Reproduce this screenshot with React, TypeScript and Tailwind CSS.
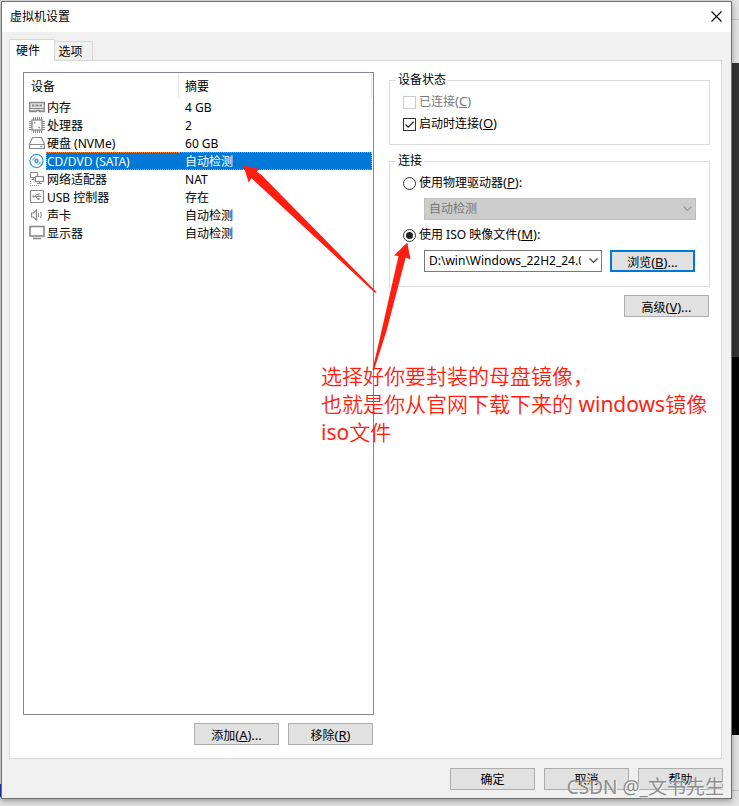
import { useState } from "react";
import type { ButtonHTMLAttributes, InputHTMLAttributes, ReactNode, SelectHTMLAttributes } from "react";
import clsx from "clsx";

type Device = {
  id: string;
  name: string;
  summary: string;
  icon: ReactNode;
};

const Icon = ({ children }: { children: ReactNode }) => (
  <svg viewBox="0 0 16 16" className="ml-[5px] block h-4 w-4" fill="none" stroke="#8a8a8a" aria-hidden="true">
    {children}
  </svg>
);

const devices: Device[] = [
  {
    id: "memory",
    name: "内存",
    summary: "4 GB",
    icon: (
      <Icon>
        <path d="M.7 3.500h14.600v9h-5v-1h-3v1H.7z" fill="#e6e6e6" strokeWidth="1.300" />
        <path d="M.5 9.500h15" />
        <path d="M3 6.500h2.500M6.500 6.500h3M10.500 6.500H13" strokeWidth="2" />
        <path d="M2.500 11.500h4M10.500 11.500h4" strokeDasharray="1 1" />
      </Icon>
    ),
  },
  {
    id: "cpu",
    name: "处理器",
    summary: "2",
    icon: (
      <Icon>
        <path d="M4 1.500h9M4 14.500h9" strokeWidth="3" strokeDasharray="1 1" />
        <path d="M1.500 4v9M14.500 4v9" strokeWidth="3" strokeDasharray="1 1" />
        <rect x="3" y="3" width="10" height="10" fill="#fff" strokeWidth="1.300" />
        <path d="M5 5.500h1.500M9.500 10.500H11" strokeWidth="1.300" />
      </Icon>
    ),
  },
  {
    id: "disk",
    name: "硬盘 (NVMe)",
    summary: "60 GB",
    icon: (
      <Icon>
        <path d="M3.500 2.500h9l3 6.500v4.500h-15v-4.500zM.5 9.500h15" strokeWidth="1.200" />
        <path d="M11 11.500h2.500" />
      </Icon>
    ),
  },
  {
    id: "cd",
    name: "CD/DVD (SATA)",
    summary: "自动检测",
    icon: (
      <Icon>
        <g stroke="#4a90c8">
          <circle cx="7.500" cy="8" r="6.600" strokeWidth="1.200" />
          <circle cx="7.500" cy="8" r="1.500" strokeWidth="1.500" />
          <path d="M3.700 7.500A4 4 0 0 1 6.500 4.200M11.300 8.500A4 4 0 0 1 8.500 11.800" stroke="#8cbbe0" strokeWidth="1.600" />
        </g>
      </Icon>
    ),
  },
  {
    id: "network",
    name: "网络适配器",
    summary: "NAT",
    icon: (
      <Icon>
        <path d="M6.500 6.500h-5v-5h7v4M4.500 6.500v2M2.500 8.500h3" strokeWidth="1.200" />
        <rect x="6.500" y="5.500" width="8" height="5" strokeWidth="1.200" />
        <path d="M10.500 10.500v2M8 12.500h5" strokeWidth="1.200" />
        <path d="M1.500 10v4M1 14.500h9" strokeDasharray="1 1" />
      </Icon>
    ),
  },
  {
    id: "usb",
    name: "USB 控制器",
    summary: "存在",
    icon: (
      <Icon>
        <rect x="1.500" y="1.500" width="13" height="12" rx="1" strokeWidth="1.200" />
        <path d="M4 7.500h8M6 7.500l1.500-2h2M7 7.500l1.500 2.500H10" />
        <path d="M3.500 7.500h2M9 5.500h1.500M9 10h1.500" strokeWidth="2" />
      </Icon>
    ),
  },
  {
    id: "sound",
    name: "声卡",
    summary: "自动检测",
    icon: (
      <Icon>
        <path d="M2.500 6h2l3-3v10l-3-3h-2z" strokeWidth="1.200" />
        <path d="M9.500 6v4M11.500 5q1.500 3 0 6" />
      </Icon>
    ),
  },
  {
    id: "display",
    name: "显示器",
    summary: "自动检测",
    icon: (
      <Icon>
        <rect x="1" y="1.500" width="14" height="9.500" strokeWidth="1.600" />
        <path d="M4 13.500h8" strokeWidth="1.600" />
      </Icon>
    ),
  },
];

// Access key shown after a label, e.g. (B)...
const Mnemonic = ({ letter, suffix }: { letter: string; suffix?: string }) => (
  <span className="text-[13px]">
    (<u>{letter}</u>){suffix}
  </span>
);

const Button = ({ className, ...props }: ButtonHTMLAttributes<HTMLButtonElement>) => (
  <button
    type="button"
    className={clsx("h-[22px] w-[85px] shrink-0 bg-[#e1e1e1] pt-[2px] text-center leading-4 hover:bg-[#e5f1fb]", className ?? "border border-[#adadad]")}
    {...props}
  />
);

const Checkbox = ({ children, ...props }: InputHTMLAttributes<HTMLInputElement>) => (
  <label className={clsx("flex h-[22px] items-center gap-[3px]", props.disabled && "text-[#787878]")}>
    <span className="relative h-[13px] w-[13px]">
      <input type="checkbox" className="peer block h-[13px] w-[13px] appearance-none border border-[#333] bg-white disabled:border-[#ccc]" {...props} />
      <svg viewBox="0 0 13 13" className="pointer-events-none absolute inset-0 hidden peer-checked:block" fill="none" stroke="#222" strokeWidth="1.300">
        <path d="M2.500 6.500l2.700 2.700L10.700 3.700" />
      </svg>
    </span>
    <span>{children}</span>
  </label>
);

const Radio = ({ children, ...props }: InputHTMLAttributes<HTMLInputElement>) => (
  <label className="flex h-5 items-center gap-[3px]">
    <input
      type="radio"
      name="source"
      className="grid h-[13px] w-[13px] appearance-none place-items-center rounded-full border border-[#333] bg-white before:h-[7px] before:w-[7px] before:rounded-full checked:before:bg-[#222] before:content-['']"
      {...props}
    />
    <span>{children}</span>
  </label>
);

const Select = ({ className, ...props }: SelectHTMLAttributes<HTMLSelectElement>) => (
  <div className={clsx("relative", className)}>
    <select
      className="block h-[22px] w-full appearance-none border border-[#7a7a7a] bg-white pr-5 pl-1 disabled:border-[#bfbfbf] disabled:bg-[#ccc] disabled:text-[#787878] disabled:opacity-100"
      {...props}
    />
    <svg viewBox="0 0 9 6" className={clsx("pointer-events-none absolute top-2 right-1 h-[6px] w-[9px]", props.disabled ? "stroke-[#9a9a9a]" : "stroke-[#444]")} fill="none">
      <path d="M.5.5l4 4 4-4" strokeWidth="1.200" />
    </svg>
  </div>
);

const Group = ({ title, className, children }: { title: string; className?: string; children: ReactNode }) => (
  <fieldset className={clsx("border border-[#dcdcdc] px-[6px]", className)}>
    <legend className="h-4 px-[2px] leading-4">{title}</legend>
    {children}
  </fieldset>
);

const DeviceTable = () => {
  const [selected, setSelected] = useState("cd");

  return (
    <div className="flex-1 border border-[#828790] pr-px">
      <table className="w-full table-fixed border-separate border-spacing-0 text-left">
        <colgroup>
          <col className="w-[22px]" />
          <col className="w-[133px]" />
          <col />
        </colgroup>
        <thead>
          <tr className="h-[25px]">
            <th colSpan={2} className="border-r border-[#e5e5e5] p-0 pt-[3px] pl-[7px] font-normal">
              设备
            </th>
            <th className="border-r border-[#e5e5e5] p-0 pt-[3px] pl-[6px] font-normal">摘要</th>
          </tr>
        </thead>
        <tbody>
          {devices.map((device) => {
            const active = device.id === selected;
            const cell = clsx("border-y border-dotted p-0 pt-px", active ? "border-[#ff8728] bg-[#0078d7] text-white" : "border-transparent");
            return (
              <tr key={device.id} className="h-[18px] leading-[15px]" onClick={() => setSelected(device.id)}>
                <td className="p-0">{device.icon}</td>
                <td className={clsx(cell, "border-l")}>{device.name}</td>
                <td className={clsx(cell, "border-r pl-[6px]")}>{device.summary}</td>
              </tr>
            );
          })}
        </tbody>
      </table>
    </div>
  );
};

const ConnectionSettings = () => {
  const [source, setSource] = useState("iso");

  return (
    <div className="flex min-w-0 flex-col gap-2">
      <Group title="设备状态" className="pb-[9px]">
        <div className="pt-[3px] pl-[7px]">
          <Checkbox disabled>
            已连接
            <Mnemonic letter="C" />
          </Checkbox>
          <Checkbox defaultChecked>
            启动时连接
            <Mnemonic letter="O" />
          </Checkbox>
        </div>
      </Group>

      <Group title="连接" className="pb-[14px]">
        <div className="flex flex-col gap-[5px] pt-1 pr-[7px] pl-[7px]">
          <Radio checked={source === "drive"} onChange={() => setSource("drive")}>
            使用物理驱动器
            <Mnemonic letter="P" suffix=":" />
          </Radio>
          <Select disabled={source !== "drive"} aria-label="物理驱动器" className="ml-[21px]">
            <option>自动检测</option>
          </Select>
          <Radio checked={source === "iso"} onChange={() => setSource("iso")}>
            使用 ISO 映像文件
            <Mnemonic letter="M" suffix=":" />
          </Radio>
          <div className="ml-[21px] flex gap-2 pr-px">
            <Select disabled={source !== "iso"} aria-label="ISO 映像文件" className="min-w-0 flex-1">
              <option>D:\win\Windows_22H2_24.0</option>
            </Select>
            <Button className="border-2 border-[#0078d7]">
              浏览
              <Mnemonic letter="B" suffix="..." />
            </Button>
          </div>
        </div>
      </Group>

      <div className="flex justify-end pr-px">
        <Button>
          高级
          <Mnemonic letter="V" suffix="..." />
        </Button>
      </div>
    </div>
  );
};

// Red arrows and the note drawn on top of the dialog
const Annotations = () => (
  <div className="pointer-events-none absolute inset-0">
    <svg width="739" height="806" viewBox="0 0 739 806" className="absolute top-0 left-0" fill="#ff1e10">
      <path d="M243.300 165.500L260 169.200L256.500 171.500L261 174.500L376.500 292L375 292.800L255 181.500L251.500 178L248.700 182.500Z" />
      <path d="M407.300 242.500L410.500 259.500L405.700 257.500L386.500 331L374 370L372.500 369.500L381.500 331L398.500 256L394 255.500Z" />
    </svg>
    <p className="absolute top-[362px] left-[321px] text-[21px] leading-7 font-[350] whitespace-nowrap text-[#ff1e10]">
      选择好你要封装的母盘镜像，
      <br />
      也就是你从官网下载下来的 <span className="font-normal">windows</span>镜像
      <br />
      <span className="font-normal">iso</span>文件
    </p>
    <p className="absolute right-[15px] bottom-[7px] text-[19px] leading-6 whitespace-nowrap text-[#8d8d8d] [text-shadow:1px_1px_0_#f5f5f5]">CSDN @_文书先生</p>
  </div>
);

const App = () => (
  <div className="relative isolate flex min-h-screen flex-col bg-[#e3e3e3] pt-px pr-[7px] pb-[7px] pl-px font-['Noto_Sans','Noto_Sans_CJK_SC',sans-serif] text-xs text-black">
    {/* Windows behind the dialog */}
    <div className="absolute top-[19px] right-0 -z-10 h-px w-[7px] bg-[#c4c4c4]" />
    <div className="absolute top-[63px] right-0 -z-10 h-[294px] w-[7px] bg-[#333]" />
    <div className="absolute top-[357px] right-0 -z-10 h-[378px] w-[7px] bg-black" />
    <div className="absolute right-0 bottom-[15px] -z-10 h-px w-[7px] bg-[#c4c4c4]" />
    <div className="absolute bottom-[9px] left-0 -z-10 h-[13px] w-px bg-[#2a35a8]" />

    <main className="flex flex-1 flex-col border border-[#707070] bg-[#f0f0f0] shadow-[0_2px_6px_rgba(0,0,0,0.35)]">
      <header className="flex h-[30px] items-center justify-between bg-white pr-[9px] pb-px pl-2">
        <h1>虚拟机设置</h1>
        <button type="button" aria-label="关闭">
          <svg viewBox="0 0 11 11" className="h-[11px] w-[11px]" fill="none" stroke="#000" strokeWidth="1.100">
            <path d="M.5.5l10 10M10.500.5l-10 10" />
          </svg>
        </button>
      </header>

      <div className="flex flex-1 flex-col pt-[7px] pr-[9px] pl-[7px]">
        <div role="tablist" className="flex items-end">
          <button type="button" role="tab" aria-selected="true" className="z-10 -mb-px h-[22px] w-[46px] border border-b-0 border-[#d9d9d9] bg-white pr-2">
            硬件
          </button>
          <button type="button" role="tab" aria-selected="false" className="h-[19px] w-[38px] border border-b-0 border-l-0 border-[#d9d9d9] pt-px pr-[6px]">
            选项
          </button>
        </div>

        <section className="grid flex-1 grid-cols-[351fr_321fr] gap-[15px] border border-[#d9d9d9] bg-white pt-[11px] pr-[11px] pb-[13px] pl-[13px]">
          <div className="flex min-w-0 flex-col gap-2">
            <DeviceTable />
            <div className="flex justify-end gap-[9px] pr-px">
              <Button>
                添加
                <Mnemonic letter="A" suffix="..." />
              </Button>
              <Button>
                移除
                <Mnemonic letter="R" />
              </Button>
            </div>
          </div>
          <ConnectionSettings />
        </section>
      </div>

      <footer className="flex justify-end gap-[9px] pt-[9px] pr-2 pb-2">
        <Button>确定</Button>
        <Button>取消</Button>
        <Button>帮助</Button>
      </footer>
    </main>

    <Annotations />
  </div>
);

export default App;
